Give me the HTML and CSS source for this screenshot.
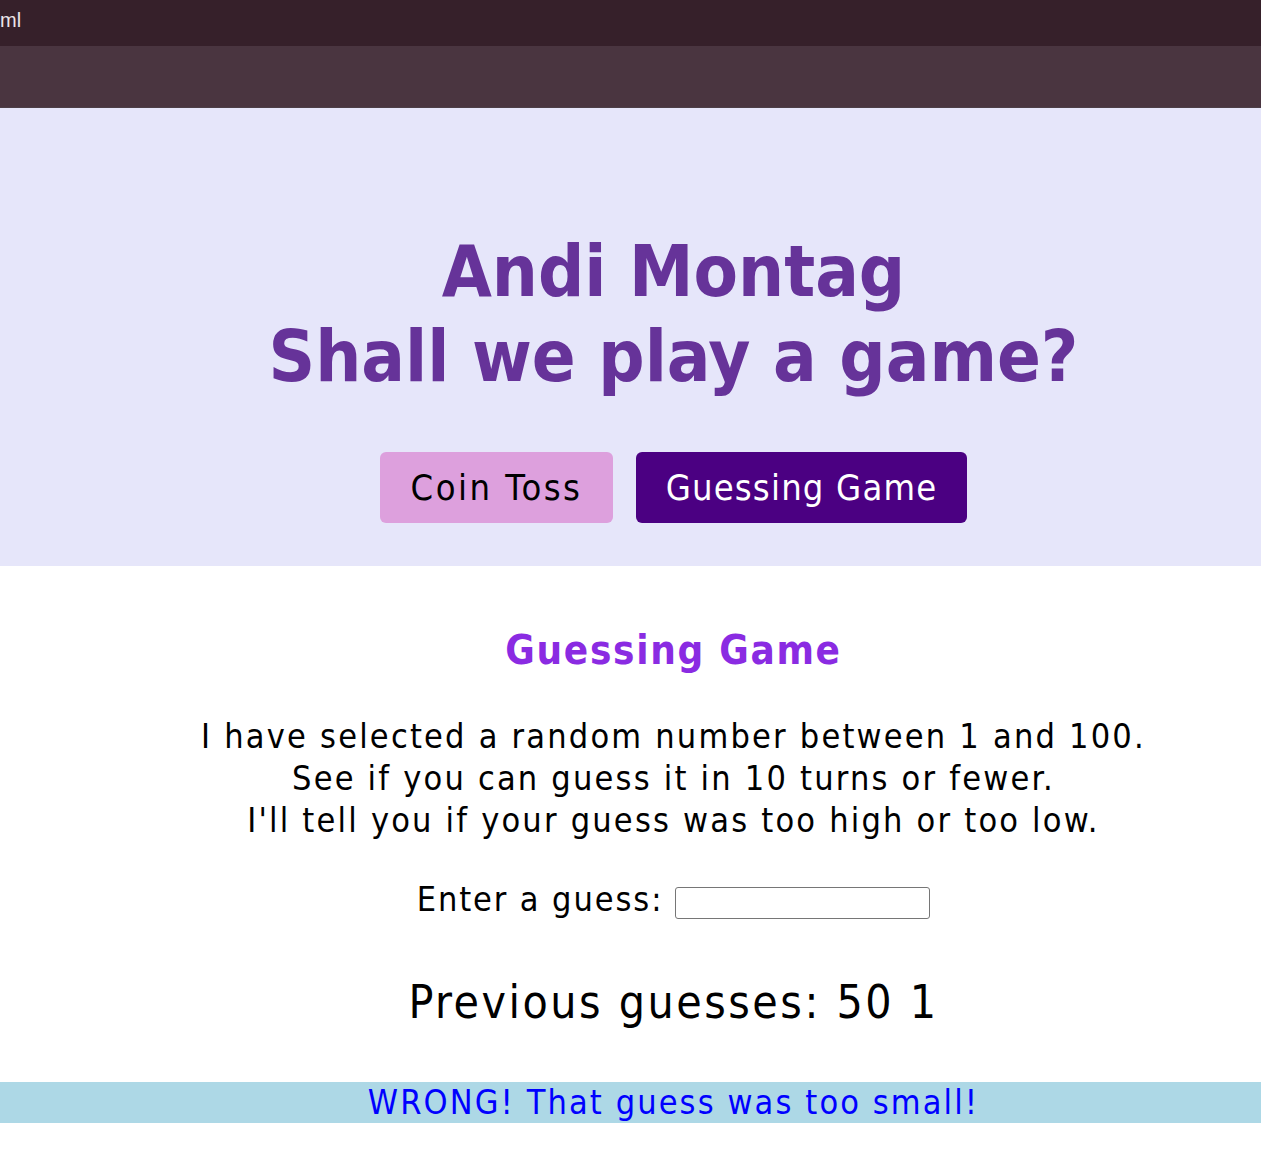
FILE: index.html
```html
<!DOCTYPE html>
<html>
<head>
<meta charset="utf-8">
<title>Andi Montag</title>
<link rel="stylesheet" href="styles.css">
</head>
<body>
<div class="tabbar"><span class="tabtitle">ml</span></div>
<div class="toolbar"></div>
<header class="hero">
  <h1 class="title">Andi Montag<br>Shall we play a game?</h1>
  <nav class="buttons">
    <button class="btn btn-coin">Coin Toss</button>
    <button class="btn btn-guess">Guessing Game</button>
  </nav>
</header>
<main class="game">
  <h2 class="game-title">Guessing Game</h2>
  <p class="intro">I have selected a random number between 1 and 100.<br>See if you can guess it in 10 turns or fewer.<br>I'll tell you if your guess was too high or too low.</p>
  <div class="entry"><label class="entry-label" for="guess">Enter a guess:</label> <input class="entry-input" id="guess" type="text"></div>
  <p class="previous">Previous guesses: 50 1</p>
</main>
<div class="result">WRONG! That guess was too small!</div>
</body>
</html>
```

FILE: styles.css
```css
html, body {
  margin: 0;
  padding: 0;
  background: #ffffff;
}
body {
  font-family: "DejaVu Sans Condensed", "DejaVu Sans", sans-serif;
  color: #000;
}
.tabbar {
  height: 46px;
  background: #36202a;
  display: flex;
  align-items: center;
}
.tabtitle {
  color: #ece4e8;
  font-family: "Liberation Sans", sans-serif;
  font-size: 20px;
  margin-top: -6px;
}
.toolbar {
  height: 61px;
  background: #4a3540;
  border-bottom: 1px solid #4d3f47;
}
.hero {
  background: #e6e6fa;
  height: 458px;
  padding-left: 86px;
  box-sizing: border-box;
  display: flex;
  flex-direction: column;
  align-items: center;
}
.title {
  margin: 121px 0 0;
  font-size: 72px;
  line-height: 85px;
  color: #663399;
  text-align: center;
  letter-spacing: 0;
}
.buttons {
  display: flex;
  gap: 23px;
  margin-top: 53px;
}
.btn {
  font-family: inherit;
  font-size: 36px;
  letter-spacing: 1.2px;
  border: none;
  border-radius: 6px;
  height: 71px;
  padding: 0 20px;
}
.btn-coin {
  background: #dda0dd;
  color: #000;
  width: 233px;
  letter-spacing: 2.5px;
}
.btn-guess {
  background: #4b0082;
  color: #fff;
  width: 331px;
}
.game {
  padding-left: 86px;
  text-align: center;
}
.game-title {
  margin: 0;
  padding-top: 61px;
  font-size: 40px;
  line-height: 46px;
  color: #8a2be2;
  letter-spacing: 1.7px;
}
.intro {
  margin: 42px 0 0;
  font-size: 34px;
  line-height: 42px;
  letter-spacing: 2.2px;
}
.entry {
  margin-top: 38px;
  font-size: 34px;
  letter-spacing: 1.9px;
  display: flex;
  justify-content: center;
  align-items: center;
  gap: 12px;
}
.entry-input {
  width: 255px;
  height: 32px;
  box-sizing: border-box;
  border: 1px solid #767676;
  border-radius: 3px;
  margin-top: 8px;
}
.previous {
  margin: 56px 0 0;
  font-size: 46px;
  line-height: 54px;
  letter-spacing: 2.5px;
}
.result {
  margin-top: 53px;
  background: #add8e6;
  color: #0000ff;
  height: 41px;
  line-height: 41px;
  font-size: 34px;
  text-align: center;
  padding-left: 86px;
  letter-spacing: 2.1px;
}
```
